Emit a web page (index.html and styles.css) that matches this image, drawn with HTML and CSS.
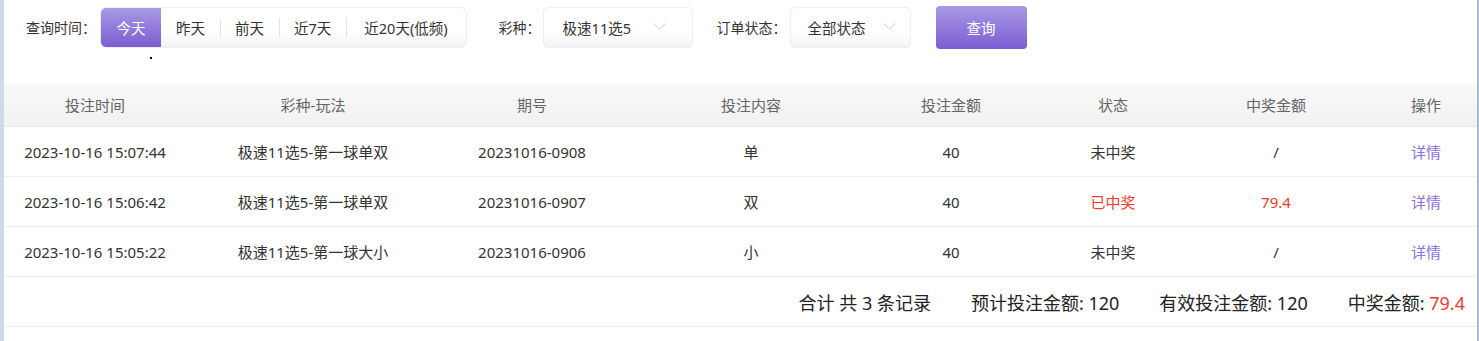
FILE: index.html
```html
<!DOCTYPE html>
<html lang="zh-CN">
<head>
<meta charset="utf-8">
<title>投注记录</title>
<link rel="stylesheet" href="styles.css">
</head>
<body>
<div class="page">
  <div class="edge-left"></div>
  <main class="main">
    <div class="filters">
      <span class="label">查询时间：</span>
      <div class="seg">
        <span class="seg-item active">今天</span>
        <span class="seg-item">昨天</span>
        <span class="seg-item sep">前天</span>
        <span class="seg-item sep">近7天</span>
        <span class="seg-item sep seg-wide">近20天(低频)</span>
      </div>
      <span class="label label-lot">彩种：</span>
      <div class="select sel-lot">
        <span>极速11选5</span>
        <svg class="chev" width="13" height="7" viewBox="0 0 13 7"><polyline points="0.5,0.5 6.5,6 12.5,0.5" fill="none" stroke="#c9c9d2" stroke-width="1"/></svg>
      </div>
      <span class="label label-status">订单状态：</span>
      <div class="select sel-status">
        <span>全部状态</span>
        <svg class="chev" width="13" height="7" viewBox="0 0 13 7"><polyline points="0.5,0.5 6.5,6 12.5,0.5" fill="none" stroke="#c9c9d2" stroke-width="1"/></svg>
      </div>
      <button class="btn-query">查询</button>
      <span class="cursor-dot"></span>
    </div>

    <div class="table">
      <div class="row head">
        <span>投注时间</span><span>彩种-玩法</span><span>期号</span><span>投注内容</span><span>投注金额</span><span>状态</span><span>中奖金额</span><span class="op">操作</span>
      </div>
      <div class="row">
        <span>2023-10-16 15:07:44</span><span>极速11选5-第一球单双</span><span>20231016-0908</span><span>单</span><span>40</span><span>未中奖</span><span>/</span><span class="op link">详情</span>
      </div>
      <div class="row">
        <span>2023-10-16 15:06:42</span><span>极速11选5-第一球单双</span><span>20231016-0907</span><span>双</span><span>40</span><span class="red">已中奖</span><span class="red">79.4</span><span class="op link">详情</span>
      </div>
      <div class="row">
        <span>2023-10-16 15:05:22</span><span>极速11选5-第一球大小</span><span>20231016-0906</span><span>小</span><span>40</span><span>未中奖</span><span>/</span><span class="op link">详情</span>
      </div>
      <div class="summary">
        <span>合计 共 3 条记录</span>
        <span>预计投注金额: 120</span>
        <span>有效投注金额: 120</span>
        <span>中奖金额: <em class="red">79.4</em></span>
      </div>
    </div>
  </main>
  <div class="edge-right"></div>
</div>
</body>
</html>
```

FILE: styles.css
```css
* { box-sizing: border-box; }
html, body { margin: 0; padding: 0; background: #fff; }
body {
  font-family: "Noto Sans", "Noto Sans CJK SC", sans-serif;
  color: #333;
  width: 1479px;
  height: 341px;
  overflow: hidden;
}
.page { display: flex; height: 341px; }
.edge-left { width: 4px; background: #cfd9ea; flex: none; }
.edge-right { width: 2px; background: #a9b9cd; flex: none; }
.main { width: 1473px; flex: none; background: #fff; }

.filters {
  position: relative;
  display: flex;
  align-items: center;
  height: 55px;
  padding-left: 22px;
  margin-bottom: 28px;
  font-size: 14.5px;
}
.label { color: #333; font-size: 14px; line-height: 20px; white-space: nowrap; }
.label-lot { margin-left: 32px; }
.label-status { margin-left: 24px; }

.seg {
  display: flex;
  height: 41px;
  margin-left: 4px;
  border: 1px solid #eeeef2;
  border-radius: 6px;
  overflow: hidden;
  background: linear-gradient(#ffffff 60%, #f3f3f5);
}
.seg-item {
  position: relative;
  display: flex;
  align-items: center;
  padding: 0 15px;
  color: #333;
  white-space: nowrap;
}
.seg-item.active {
  color: #fff;
  background: linear-gradient(#a999e6, #7a5dd2);
  padding: 0 15.5px;
}
.seg-item.seg-wide { padding: 0 18px; }
.seg-item.sep::before {
  content: "";
  position: absolute;
  left: 0; top: 10px; bottom: 10px;
  width: 1px;
  background: #e4e4e8;
}

.select {
  display: flex;
  align-items: center;
  justify-content: space-between;
  height: 41px;
  border: 1px solid #eeeef2;
  border-radius: 5px;
  background: linear-gradient(#ffffff 60%, #f3f3f5);
  color: #333;
  white-space: nowrap;
}
.sel-lot { width: 150px; margin-left: 2px; padding: 0 26px 0 19px; }
.sel-status { width: 121px; margin-left: 3px; padding: 0 14px 0 17px; }
.chev { display: block; margin-top: -2px; }

.btn-query {
  width: 91px;
  height: 43px;
  margin-left: 25px;
  border: none;
  border-radius: 4px;
  background: linear-gradient(#a999e6, #7a5dd2);
  color: #fff;
  font-family: inherit;
  font-size: 14.5px;
}
.cursor-dot {
  position: absolute;
  left: 146px;
  top: 57px;
  width: 2px;
  height: 2px;
  background: #000;
}

.table { font-size: 15px; }
.row {
  display: grid;
  grid-template-columns: 182px 254px 184px 254px 146px 178px 148px 1fr;
  align-items: center;
  justify-items: center;
  height: 50px;
  border-bottom: 1px solid #eeeef0;
  color: #333;
  white-space: nowrap;
}
.row.head {
  height: 44px;
  background: linear-gradient(#f9f9f9, #f1f1f2);
  border-bottom: 1px solid #e8e8ee;
  color: #666;
}
.row .op { padding-left: 25px; }
.link { color: #8a6fe0; }
.red { color: #ee3a2e; font-style: normal; }

.summary {
  display: flex;
  justify-content: flex-end;
  align-items: center;
  gap: 40px;
  height: 50px;
  padding-right: 12px;
  border-bottom: 1px solid #ececf2;
  font-size: 18px;
  color: #222;
  white-space: nowrap;
}
```
